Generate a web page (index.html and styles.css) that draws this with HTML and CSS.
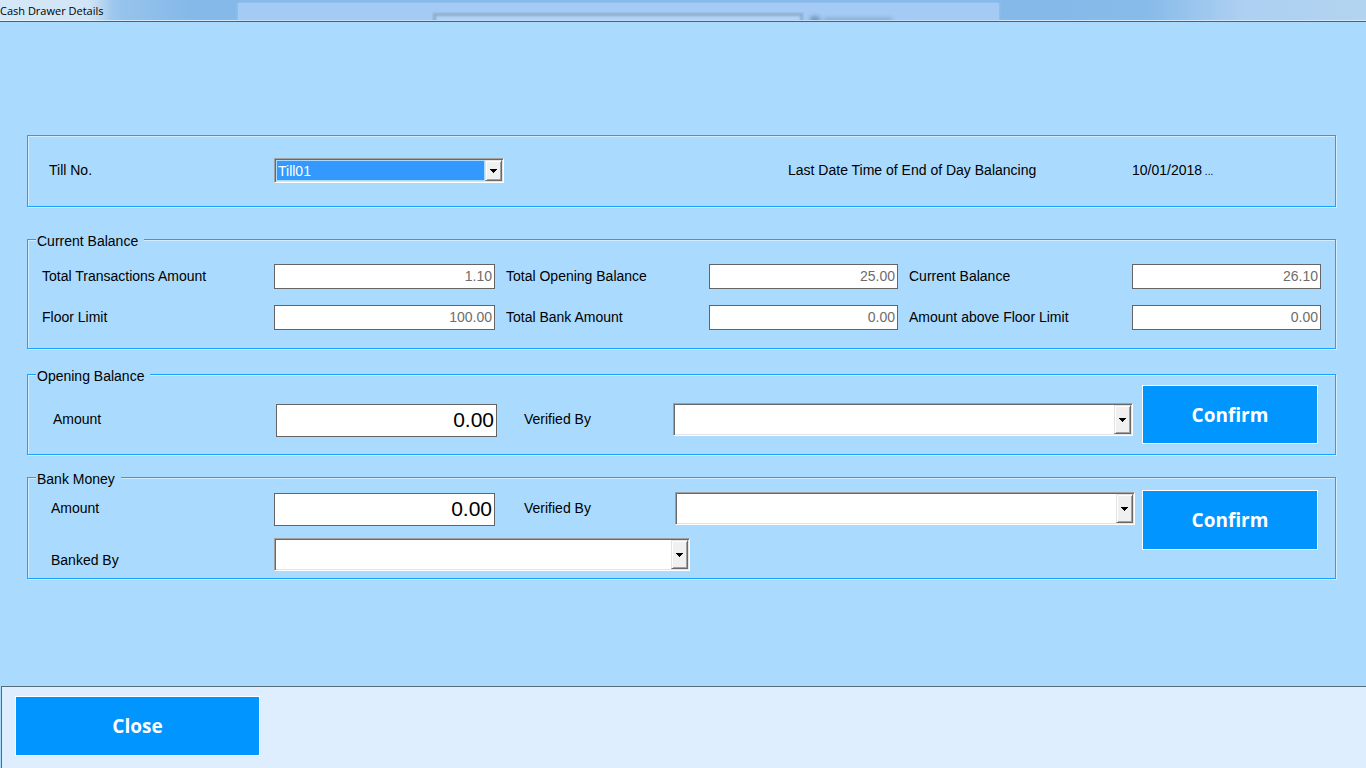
FILE: index.html
```html
<!DOCTYPE html>
<html lang="en">
<head>
<meta charset="UTF-8">
<meta name="viewport" content="width=device-width, initial-scale=1.0">
<title>Cash Drawer Details</title>
<link rel="stylesheet" href="styles.css">
</head>
<body>
<header class="titlebar">
    <div class="glass">
        <span class="glass-field"></span>
        <span class="glass-dot"></span>
        <span class="glass-line"></span>
    </div>
    <h1>Cash Drawer Details</h1>
</header>

<main>
    <form id="drawerForm">
        <fieldset class="group till">
            <label for="till">Till No.</label>
            <span class="combo">
                <select id="till" class="selected">
                    <option>Till01</option>
                </select>
                <span class="arrow"><svg width="7" height="4" viewBox="0 0 7 4" shape-rendering="crispEdges"><path d="M0 0h7v1h-1v1h-1v1h-1v1h-1v-1h-1v-1h-1v-1h-1z"/></svg></span>
            </span>
            <label class="last-label" for="lastDate">Last Date Time of End of Day Balancing</label>
            <output id="lastDate">10/01/2018<span class="dots"> ...</span></output>
        </fieldset>

        <fieldset class="group balance">
            <legend>Current Balance</legend>
            <label for="totalTrans">Total Transactions Amount</label>
            <input type="text" id="totalTrans" value="1.10" disabled>
            <label for="totalOpening">Total Opening Balance</label>
            <input type="text" id="totalOpening" value="25.00" disabled>
            <label for="currentBalance">Current Balance</label>
            <input type="text" id="currentBalance" value="26.10" disabled>
            <label for="floorLimit">Floor Limit</label>
            <input type="text" id="floorLimit" value="100.00" disabled>
            <label for="totalBank">Total Bank Amount</label>
            <input type="text" id="totalBank" value="0.00" disabled>
            <label for="aboveFloor">Amount above Floor Limit</label>
            <input type="text" id="aboveFloor" value="0.00" disabled>
        </fieldset>

        <fieldset class="group opening">
            <legend>Opening Balance</legend>
            <label for="openingAmount">Amount</label>
            <input type="text" id="openingAmount" class="amount" value="0.00">
            <label class="verified" for="openingVerified">Verified By</label>
            <span class="combo tall">
                <select id="openingVerified"><option></option></select>
                <span class="arrow"><svg width="7" height="4" viewBox="0 0 7 4" shape-rendering="crispEdges"><path d="M0 0h7v1h-1v1h-1v1h-1v1h-1v-1h-1v-1h-1v-1h-1z"/></svg></span>
            </span>
            <button type="button" class="confirm">Confirm</button>
        </fieldset>

        <fieldset class="group bank">
            <legend>Bank Money</legend>
            <div class="bank-fields">
                <div class="bank-row">
                    <label for="bankAmount">Amount</label>
                    <input type="text" id="bankAmount" class="amount" value="0.00">
                    <label class="verified" for="bankVerified">Verified By</label>
                    <span class="combo tall">
                        <select id="bankVerified"><option></option></select>
                        <span class="arrow"><svg width="7" height="4" viewBox="0 0 7 4" shape-rendering="crispEdges"><path d="M0 0h7v1h-1v1h-1v1h-1v1h-1v-1h-1v-1h-1v-1h-1z"/></svg></span>
                    </span>
                </div>
                <div class="banked-row">
                    <label for="bankedBy">Banked By</label>
                    <span class="combo tall">
                        <select id="bankedBy"><option></option></select>
                        <span class="arrow"><svg width="7" height="4" viewBox="0 0 7 4" shape-rendering="crispEdges"><path d="M0 0h7v1h-1v1h-1v1h-1v1h-1v-1h-1v-1h-1v-1h-1z"/></svg></span>
                    </span>
                </div>
            </div>
            <button type="button" class="confirm">Confirm</button>
        </fieldset>
    </form>
</main>

<footer>
    <button type="button" class="close">Close</button>
</footer>
</body>
</html>
```
FILE: styles.css
```css
* {
    box-sizing: border-box;
}
body {
    margin: 0;
    min-height: 100vh;
    display: flex;
    flex-direction: column;
    background-color: #aadbff;
    color: #000;
    font-family: "Liberation Sans", Arial, sans-serif;
    font-size: 14px;
    line-height: 16px;
}

/* title bar */
.titlebar {
    position: relative;
    overflow: hidden;
    height: 22px;
    border-bottom: 1px solid #4d6075;
    box-shadow: inset 0 -1px 0 #d5e7f8;
    background: linear-gradient(to right, #b9d8f2 0, #b4d5f1 6%, #96c3ec 9%, #84b9e9 14%, #84b9e9 76%, #87bbea 84%, #aed0f2 91%, #b2d4f0 100%);
}
.titlebar h1 {
    position: relative;
    display: inline-block;
    margin: 0;
    padding-right: 8px;
    font-family: "Open Sans", sans-serif;
    font-size: 11px;
    font-weight: normal;
    line-height: 21px;
    background: linear-gradient(to right, rgba(255, 255, 255, 0.4) 80%, rgba(255, 255, 255, 0));
}
.glass {
    position: absolute;
    top: 3px;
    bottom: 1px;
    left: 17.4%;
    width: 55.7%;
    background-color: #a5cbf5;
    box-shadow: 0 0 3px #a5cbf5;
    overflow: hidden;
}
.glass-field {
    position: absolute;
    top: 10px;
    left: 25.7%;
    width: 48.6%;
    height: 20px;
    border: 3px solid #8badcd;
    background-color: #b3d3f5;
    filter: blur(1px);
}
.glass-dot {
    position: absolute;
    top: 13px;
    left: 75.2%;
    width: 10px;
    height: 8px;
    border-radius: 4px;
    background-color: #7397b9;
    filter: blur(2px);
}
.glass-line {
    position: absolute;
    top: 15px;
    left: 77%;
    width: 9%;
    height: 4px;
    background-color: #84a7ca;
    filter: blur(2px);
}

/* groups */
main {
    flex: 1;
    padding: 113px 30px 24px 27px;
}
.group {
    --indent: 14px;
    display: grid;
    align-items: center;
    min-width: 0;
    margin: 0;
    border: 1px solid #1ea0ff;
    box-shadow: 1px 1px 0 #d2edff, inset 1px 1px 0 #d2edff;
}
legend {
    margin-left: calc(8px - var(--indent));
    padding: 3px 6px 0 1px;
    background-color: #aadbff;
}
label {
    padding-bottom: 2px;
}
.till {
    --indent: 21px;
    grid-template-columns: 225fr 230fr 284fr 344fr 189fr;
    padding: 22px 14px 23px var(--indent);
}
.last-label {
    grid-column: 4;
}
.dots {
    font-size: 10px;
}
.balance {
    grid-template-columns: 221fr 221fr 192fr 189fr 212fr 189fr;
    gap: 16px 11px;
    margin-top: 23px;
    padding: 15px 14px 18px var(--indent);
}
.opening {
    --indent: 25px;
    grid-template-columns: 214fr 221fr 158fr 460fr 176fr;
    column-gap: 9px;
    margin-top: 16px;
    padding: 1px 17px 0 var(--indent);
}
.opening .verified {
    padding-left: 18px;
}
.opening .confirm {
    align-self: start;
    margin-bottom: 10px;
}
.bank {
    --indent: 23px;
    grid-template-columns: 1084fr 176fr;
    align-items: start;
    column-gap: 7px;
    margin-top: 13px;
    padding: 3px 17px 5px var(--indent);
}
.bank .verified {
    padding-left: 22px;
}
.bank-fields {
    display: grid;
    row-gap: 12px;
    padding: 1px 0 2px;
}
.bank-row,
.banked-row {
    display: grid;
    align-items: center;
    column-gap: 7px;
}
.bank-row {
    grid-template-columns: 216fr 221fr 166fr 460fr;
}
.banked-row {
    grid-template-columns: 216fr 416fr 438fr;
}
.banked-row label {
    padding-top: 12px;
}

/* controls */
input {
    width: 100%;
    min-width: 0;
    height: 25px;
    padding: 0 2px 1px;
    border: 1px solid #646464;
    border-radius: 0;
    background-color: #fff;
    color: #000;
    font: inherit;
    text-align: right;
}
input:disabled {
    color: #6d6d6d;
}
.amount {
    height: 33px;
    margin: 2px 0 0;
    font-size: 21px;
}
.combo {
    position: relative;
    display: block;
    height: 25px;
}
.tall {
    height: 33px;
}
select {
    appearance: none;
    display: block;
    width: 100%;
    height: 100%;
    padding: 2px 19px 2px 2px;
    border: 1px solid;
    border-color: #a0a0a0 #fff #fff #a0a0a0;
    border-radius: 0;
    box-shadow: inset 1px 1px 0 #696969, inset -1px -1px 0 #e3e3e3;
    background-color: #fff;
    color: #000;
    font: inherit;
}
.selected {
    background-image: linear-gradient(#39f, #39f);
    background-origin: content-box;
    background-clip: content-box, border-box;
    background-repeat: no-repeat;
    color: #fff;
    text-indent: 1px;
}
.arrow {
    position: absolute;
    top: 2px;
    right: 2px;
    bottom: 2px;
    width: 17px;
    display: flex;
    align-items: center;
    justify-content: center;
    border: 1px solid;
    border-color: #e3e3e3 #696969 #696969 #e3e3e3;
    box-shadow: inset 1px 1px 0 #fff, inset -1px -1px 0 #a0a0a0;
    background-color: #f0f0f0;
    pointer-events: none;
}
button {
    height: 60px;
    padding: 0;
    border: 1px solid #fff;
    border-radius: 0;
    background-color: #0095ff;
    color: #fff;
    font-family: "Open Sans", sans-serif;
    font-size: 19px;
    font-weight: bold;
    cursor: pointer;
}
.opening button {
    height: 59px;
}

/* bottom bar */
footer {
    margin-left: 1px;
    padding: 9px 13px 12px;
    border-top: 1px solid #596b7a;
    border-left: 1px solid #596b7a;
    background-color: #deeeff;
}
.close {
    width: 245px;
}
```
